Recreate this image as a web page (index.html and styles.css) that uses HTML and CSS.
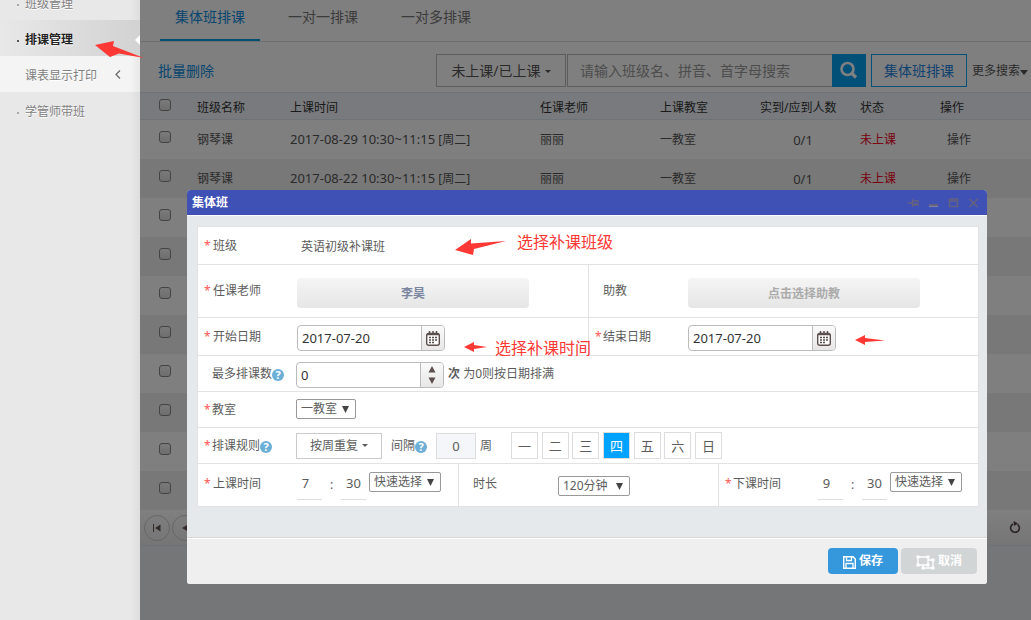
FILE: index.html
```html
<!DOCTYPE html>
<html lang="zh-CN">
<head>
<meta charset="utf-8">
<title>排课管理</title>
<link rel="stylesheet" href="styles.css">
</head>
<body>
<div class="app">
  <nav class="sidebar">
    <a class="nav-item dot" href="#">班级管理</a>
    <a class="nav-item dot active" href="#">排课管理</a>
    <a class="nav-item open" href="#">课表显示打印
      <svg class="chevron" width="6" height="9" viewBox="0 0 6 9"><path d="M5 .5 1 4.500 5 8.500" fill="none" stroke="#666" stroke-width="1.200"/></svg>
    </a>
    <a class="nav-item dot" href="#">学管师带班</a>
    <svg class="nav-arrow" width="50" height="20" viewBox="95 40 50 20"><path d="M95 45 114 41 113 46 144 58 119 53.500 110 57Z" fill="#fd3835"/></svg>
  </nav>
  <main class="main">
    <div class="tabs">
      <a class="tab current" href="#">集体班排课</a>
      <a class="tab" href="#">一对一排课</a>
      <a class="tab" href="#">一对多排课</a>
    </div>
    <div class="toolbar">
      <a class="batch" href="#">批量删除</a>
      <button class="filter" type="button">未上课/已上课<i class="caret"></i></button>
      <div class="search">
        <input class="search-text" type="text" aria-label="搜索" placeholder="请输入班级名、拼音、首字母搜索">
        <button class="search-go" type="button" aria-label="搜索"><svg width="19" height="19" viewBox="0 0 19 19"><circle cx="8.500" cy="8" r="6" fill="none" stroke="#fff" stroke-width="2.600"/><path d="m13 12.500 4 4" stroke="#fff" stroke-width="3.200"/></svg></button>
      </div>
      <button class="create" type="button">集体班排课</button>
      <a class="more" href="#">更多搜索<i class="caret big"></i></a>
    </div>
    <table class="grid">
      <colgroup><col class="c-check"><col class="c-name"><col class="c-time"><col class="c-teacher"><col class="c-room"><col class="c-count"><col class="c-state"><col></colgroup>
      <thead><tr><th><input type="checkbox" aria-label="全选"></th><th>班级名称</th><th>上课时间</th><th>任课老师</th><th>上课教室</th><th>实到/应到人数</th><th>状态</th><th>操作</th></tr></thead>
      <tbody>
        <tr><td><input type="checkbox" aria-label="选择"></td><td>钢琴课</td><td><span class="num">2017-08-29 10:30~11:15</span> [周二]</td><td>丽丽</td><td>一教室</td><td class="count">0/1</td><td class="late">未上课</td><td class="act">操作</td></tr>
        <tr><td><input type="checkbox" aria-label="选择"></td><td>钢琴课</td><td><span class="num">2017-08-22 10:30~11:15</span> [周二]</td><td>丽丽</td><td>一教室</td><td class="count">0/1</td><td class="late">未上课</td><td class="act">操作</td></tr>
        <tr><td><input type="checkbox" aria-label="选择"></td><td colspan="7"></td></tr>
        <tr><td><input type="checkbox" aria-label="选择"></td><td colspan="7"></td></tr>
        <tr><td><input type="checkbox" aria-label="选择"></td><td colspan="7"></td></tr>
        <tr><td><input type="checkbox" aria-label="选择"></td><td colspan="7"></td></tr>
        <tr><td><input type="checkbox" aria-label="选择"></td><td colspan="7"></td></tr>
        <tr><td><input type="checkbox" aria-label="选择"></td><td colspan="7"></td></tr>
        <tr><td><input type="checkbox" aria-label="选择"></td><td colspan="7"></td></tr>
        <tr><td><input type="checkbox" aria-label="选择"></td><td colspan="7"></td></tr>
      </tbody>
    </table>
    <div class="pager">
      <button class="page" type="button" aria-label="首页"><svg width="8" height="8" viewBox="0 0 8 8"><path d="M0 0h1v8H0zM7.500.500v7L2 4z" fill="#655"/></svg></button>
      <button class="page" type="button" aria-label="上一页"><svg width="8" height="8" viewBox="0 0 8 8"><path d="M7 .500v7L1 4z" fill="#655"/></svg></button>
      <button class="reload" type="button" aria-label="刷新"><svg width="12" height="13" viewBox="0 0 12 13"><path d="M8.500 3.300A4.400 4.400 0 1 1 4 3" fill="none" stroke="#544" stroke-width="1.600"/><path d="M4.500 0 9 2.500 5 5z" fill="#544"/></svg></button>
    </div>
    <div class="shade"></div>

    <section class="dialog" role="dialog" aria-label="集体班">
      <header class="dialog-head">
        <h2 class="dialog-title">集体班</h2>
        <button class="tool" type="button" aria-label="固定"><svg width="11" height="11" viewBox="0 0 11 11"><path d="M0 6h4M4.500 2v8M4.500 4H10v4H4.500M5 7h4" fill="none" stroke="#656281" stroke-width="1.300"/></svg></button>
        <button class="tool" type="button" aria-label="最小化"><svg width="11" height="11" viewBox="0 0 11 11"><rect x="1" y="7" width="9" height="2" fill="#656281"/><rect x="1" y="9" width="9" height="1" fill="#8583a5"/></svg></button>
        <button class="tool" type="button" aria-label="最大化"><svg width="11" height="11" viewBox="0 0 11 11"><path d="M1.500 2h8v7.500h-8zM1 4h9" fill="none" stroke="#656281" stroke-width="1.500"/></svg></button>
        <button class="tool" type="button" aria-label="关闭"><svg width="11" height="11" viewBox="0 0 11 11"><path d="m1.500 2 8 8M9.500 2l-8 8" stroke="#656281" stroke-width="1.600"/></svg></button>
      </header>
      <form class="dialog-body">
        <div class="sheet">
          <div class="row r-class">
            <div class="cell"><span class="label req">班级</span><span class="value">英语初级补课班</span></div>
          </div>
          <div class="row r-teacher two">
            <div class="cell"><span class="label req">任课老师</span><button class="pick chosen" type="button">李昊</button></div>
            <div class="cell"><span class="label">助教</span><button class="pick" type="button">点击选择助教</button></div>
          </div>
          <div class="row r-date two">
            <div class="cell"><label class="label req" for="start">开始日期</label><span class="combo"><input id="start" type="text" value="2017-07-20"><button type="button" aria-label="选择开始日期"><svg width="14" height="15" viewBox="0 0 14 15"><rect x=".700" y="2.500" width="12.600" height="11.800" rx="2" fill="#fff" stroke="#5a4f4c" stroke-width="1.400"/><path d="M1 3.500h12M3.500 0v4M7 0v4M10.500 0v4" stroke="#5a4f4c" stroke-width="1.500"/><path d="M3 6.500h2m1 0h2m1 0h2M3 9h2m1 0h2m1 0h2M3 11.500h2m1 0h2" stroke="#5a4f4c" stroke-width="1.700"/></svg></button></span></div>
            <div class="cell"><label class="label req" for="end">结束日期</label><span class="combo"><input id="end" type="text" value="2017-07-20"><button type="button" aria-label="选择结束日期"><svg width="14" height="15" viewBox="0 0 14 15"><rect x=".700" y="2.500" width="12.600" height="11.800" rx="2" fill="#fff" stroke="#5a4f4c" stroke-width="1.400"/><path d="M1 3.500h12M3.500 0v4M7 0v4M10.500 0v4" stroke="#5a4f4c" stroke-width="1.500"/><path d="M3 6.500h2m1 0h2m1 0h2M3 9h2m1 0h2m1 0h2M3 11.500h2m1 0h2" stroke="#5a4f4c" stroke-width="1.700"/></svg></button></span></div>
          </div>
          <div class="row narrow">
            <div class="cell"><label class="label" for="max">最多排课数<i class="help">?</i></label><span class="combo"><input id="max" type="text" value="0"><button type="button" aria-label="增减"><svg width="8" height="18" viewBox="0 0 8 18"><path d="M4 0 7.500 6.500h-7zM4 18 .500 11.500h7z" fill="#5a4f4c"/></svg></button></span><span class="hint"><b>次</b> 为0则按日期排满</span></div>
          </div>
          <div class="row narrow">
            <div class="cell"><label class="label req" for="room">教室</label><select id="room" class="select room"><option>一教室</option></select></div>
          </div>
          <div class="row narrow">
            <div class="cell rule"><span class="label req">排课规则<i class="help">?</i></span><button class="repeat" type="button">按周重复<i class="caret"></i></button><label class="gap-label" for="gap">间隔<i class="help">?</i></label><input id="gap" class="gap" type="text" value="0"><span class="week">周</span>
              <div class="days"><button type="button">一</button><button type="button">二</button><button type="button">三</button><button class="on" type="button">四</button><button type="button">五</button><button type="button">六</button><button type="button">日</button></div>
            </div>
          </div>
          <div class="row r-time three">
            <div class="cell"><span class="label req">上课时间</span><input class="clock" type="text" aria-label="上课时" value="7"><span class="colon">:</span><input class="clock" type="text" aria-label="上课分" value="30"><select class="select" aria-label="上课快速选择"><option>快速选择</option></select></div>
            <div class="cell"><label class="label" for="len">时长</label><select id="len" class="select"><option>120分钟</option></select></div>
            <div class="cell"><span class="label req">下课时间</span><input class="clock" type="text" aria-label="下课时" value="9"><span class="colon">:</span><input class="clock" type="text" aria-label="下课分" value="30"><select class="select" aria-label="下课快速选择"><option>快速选择</option></select></div>
          </div>
        </div>
      </form>
      <footer class="dialog-foot">
        <button class="btn save" type="button"><svg width="13" height="13" viewBox="0 0 13 13"><path d="M.700.700h9.300l2.300 2.300v9.300H.700z" fill="none" stroke="#fff" stroke-width="1.400"/><path d="M3.500 1v3.500h5V1M3 12V7.500h7V12" fill="none" stroke="#fff" stroke-width="1.300"/></svg>保存</button>
        <button class="btn cancel" type="button"><svg width="19" height="15" viewBox="0 0 19 15"><path d="M2 2h10v8H2zM12 5h5v8H7v-3" fill="none" stroke="#fff" stroke-width="1.300"/><path d="M.500.500h3v3h-3zM10.500.500h3v3h-3zM.500 8.500h3v3h-3zM10.500 8.500h3v3h-3zM15.500 3.500h3v3h-3zM15.500 11.500h3v3h-3zM5.500 11.500h3v3h-3z" fill="#fff"/></svg>取消</button>
      </footer>
      <svg class="marks" width="450" height="125" viewBox="450 235 450 125" fill="#fd3835"><path d="M455 250 471 239v4.500L506 241 474 249l-1 6z"/><path d="m464 347 10-5v3l13 2-13 2v3z"/><path d="m855 340 10-5v3l20 2.500-20 1.500v3z"/></svg>
      <span class="note note-class">选择补课班级</span>
      <span class="note note-time">选择补课时间</span>
    </section>
  </main>
</div>
</body>
</html>
```

FILE: styles.css
```css
* { box-sizing: border-box; }
body {
  margin: 0;
  font: 12px/18px "Noto Sans", "Noto Sans CJK SC", sans-serif;
  color: #555;
}
button, input, select { font: inherit; color: inherit; margin: 0; }
button { padding: 0; cursor: pointer; }
a { color: inherit; text-decoration: none; }
i { font-style: normal; }
svg { display: block; flex: none; }
.app { display: flex; min-height: 100vh; overflow: hidden; }

.sidebar {
  position: relative;
  z-index: 2;
  width: 140px;
  flex: none;
  margin-top: -16px;
  background: linear-gradient(90deg, #e9e8e8 130px, #dedede);
}
.nav-item {
  position: relative;
  display: flex;
  align-items: center;
  height: 36px;
  padding: 3px 0 0 25px;
  color: #808080;
  text-shadow: 0 1px 0 #fff;
}
.dot::before {
  content: "";
  position: absolute;
  left: 17px;
  top: 20px;
  width: 2px;
  height: 2px;
  background: #aaa;
}
.active {
  background: linear-gradient(90deg, #e9e8e8, #d2d2d2);
  color: #222;
  font-weight: bold;
}
.active::before { background: #555; }
.active::after {
  content: "";
  position: absolute;
  right: 0;
  top: 15px;
  border: 5px solid transparent;
  border-left: 0;
  border-right-color: #fff;
}
.open { background: linear-gradient(90deg, #f4f4f4 130px, #e8e8e8); }
.chevron { margin: 0 0 2px 18px; }
.nav-arrow { position: absolute; left: 95px; top: 56px; }

.main { position: relative; flex: 1; min-width: 0; background: #eaecf0; }
.tabs {
  display: flex;
  height: 42px;
  padding-left: 20px;
  gap: 13px;
  background: #fff;
  border-bottom: 1px solid #ddd;
  font-size: 14px;
}
.tab { width: 100px; height: 41px; line-height: 34px; text-align: center; color: #777; }
.current { color: #0a8ce0; border-bottom: 2px solid #00a0e9; }
.toolbar {
  display: flex;
  align-items: center;
  height: 50px;
  padding: 7px 3px 0 18px;
  background: #fff;
  font-size: 14px;
}
.batch { margin-right: auto; color: #0a8ce0; }
.filter { width: 130px; height: 33px; background: #fff; border: 1px solid #bbb; margin-right: 1px; }
.caret {
  display: inline-block;
  margin-left: 4px;
  border: 3px solid transparent;
  border-top-color: currentColor;
  border-bottom: 0;
  vertical-align: 3px;
}
.search { display: flex; width: 299px; margin-right: 5px; }
.search-text { flex: 1; min-width: 0; height: 33px; padding: 0 12px; background: #fff; border: 1px solid #bbb; border-right: 0; }
.search-text::placeholder { color: #999; opacity: 1; }
.search-go { display: grid; place-items: center; width: 34px; height: 33px; border: 0; background: #00a0f0; }
.create { width: 96px; height: 33px; margin-right: 5px; border: 1px solid #00a0f0; background: #fff; color: #1a82e0; }
.more { font-size: 12px; white-space: nowrap; }
.big { margin-left: 0; border-width: 5px 4px 0; vertical-align: 0; }

.grid { width: 100%; table-layout: fixed; border-collapse: collapse; background: #fff; }
.c-check { width: 50px; }
.c-name { width: 93px; }
.c-time { width: 250px; }
.c-teacher { width: 120px; }
.c-room, .c-count { width: 100px; }
.c-state { width: 80px; }
.grid th { height: 28px; padding: 3px 0 0 7px; text-align: left; font-weight: normal; color: #333; }
.grid thead tr { background: #f0f5fa; box-shadow: inset 0 1px #dde6ee, inset 0 -1px #dde6ee; }
.grid td { height: 39px; padding: 0 0 0 7px; }
.grid tbody tr:nth-child(even) { background: #f0f0f0; }
.grid th:first-child { padding: 0 0 2px 19px; }
.grid td:first-child { padding: 0 0 6px 19px; }
.grid input {
  display: block;
  width: 12px;
  height: 12px;
  appearance: none;
  border: 1px solid #888;
  border-radius: 3px;
  background: linear-gradient(#f4f4f4, #ddd);
}
.num { font-size: 13px; }
.grid .count { padding: 0; text-align: center; font-size: 13px; }
.grid .late { color: #f00020; }
.grid .act { padding-left: 14px; }
.pager {
  display: flex;
  align-items: center;
  gap: 2px;
  height: 36px;
  padding: 0 10px 0 4px;
  background: linear-gradient(#fff, #ebebeb);
  border-bottom: 1px solid #dde3ea;
}
.page { display: grid; place-items: center; width: 26px; height: 26px; border: 1px solid #ccc; border-radius: 50%; background: none; }
.reload { margin-left: auto; border: 0; background: none; }
.shade { position: absolute; inset: 0; background: rgba(0, 0, 0, .5); }

.dialog {
  position: absolute;
  left: 47px;
  right: 44px;
  top: 190px;
  border-radius: 4px 4px 3px 3px;
  background: #e5e9ec;
  overflow: hidden;
}
.dialog-head {
  display: flex;
  align-items: center;
  gap: 9px;
  height: 26px;
  padding: 0 8px 0 5px;
  background: #3f51b5;
  border-bottom: 1px solid #fff;
}
.dialog-title { margin: 0 auto 0 0; font-size: 12px; color: #fff; }
.tool { border: 0; background: none; }
.dialog-body { padding: 10px 8px 30px 10px; }
.sheet { background: #fff; border: 1px solid #e2e2e2; color: #5c5c5c; }
.row { display: grid; border-bottom: 1px solid #e2e2e2; }
.row:last-child { border-bottom: 0; }
.two { grid-template-columns: 1fr 1fr; }
.three { grid-template-columns: 1fr 1fr 1fr; }
.cell { display: flex; align-items: center; min-width: 0; }
.cell + .cell { border-left: 1px solid #e2e2e2; }
.cell + .cell .label { padding-left: 14px; }
.cell + .cell .req::before { left: 6px; }
.r-class { height: 38px; }
.r-teacher { height: 53px; }
.r-date { height: 38px; }
.narrow { height: 36px; }
.r-time { height: 42px; }
.label { position: relative; display: flex; align-items: center; flex: none; width: 99px; padding-left: 15px; }
.r-time .label { padding-bottom: 2px; }
.req::before { content: "*"; position: absolute; left: 6px; top: 0; color: #f55; }
.narrow .label { width: 98px; padding-left: 14px; }
.value { padding: 2px 0 0 4px; }
.pick {
  width: 232px;
  height: 30px;
  margin-top: 3px;
  padding-top: 2px;
  border: 0;
  border-radius: 4px;
  background: linear-gradient(#f5f5f5, #e6e6e6);
  color: #aaa;
  font-weight: bold;
}
.chosen { color: #7a86a0; }
.combo {
  display: flex;
  width: 148px;
  height: 26px;
  margin-top: 3px;
  border: 1px solid #bbb;
  border-radius: 4px;
  background: #fff;
  overflow: hidden;
  font-size: 13px;
  color: #333;
}
.narrow .combo { margin-top: 2px; }
.combo input { flex: 1; min-width: 0; border: 0; padding: 0 4px; background: none; }
.combo button { display: grid; place-items: center; width: 23px; border: 0; border-left: 1px solid #bbb; background: linear-gradient(#fafafa, #e8e6e6); }
.help {
  width: 12px;
  height: 12px;
  margin-top: 3px;
  border-radius: 50%;
  background: #6baed6;
  color: #fff;
  font-size: 11px;
  line-height: 12px;
  font-weight: bold;
  text-align: center;
}
.hint { padding-left: 4px; }
.select {
  appearance: none;
  width: 72px;
  height: 20px;
  padding: 0 0 0 4px;
  border: 1px solid #999;
  border-radius: 2px;
  line-height: 18px;
  background: #fff url("data:image/svg+xml,%3Csvg xmlns='http://www.w3.org/2000/svg' width='7' height='7'%3E%3Cpath d='M0 0h7L3.5 7z' fill='%23444'/%3E%3C/svg%3E") no-repeat right 6px top 6px;
}
.room { width: 60px; }
.narrow .room { margin-bottom: 1px; }
.repeat { width: 86px; height: 26px; border: 1px solid #ccc; background: #fff; }
.gap-label { display: flex; align-items: center; padding: 0 9px; }
.gap { width: 40px; height: 26px; border: 1px solid #ddd; background: #f4f6f9; text-align: center; font-size: 13px; }
.week { padding: 0 19px 0 4px; }
.days { display: flex; justify-content: space-between; width: 211px; }
.days button { width: 27px; height: 27px; border: 1px solid #ddd; background: #fff; font-size: 13px; }
.days .on { background: #00a2ff; color: #fff; }
.clock { width: 25px; height: 33px; margin-bottom: 4px; padding: 0 8px 0 0; border: 0; border-bottom: 1px solid #ddd; background: none; text-align: center; font-size: 13px; }
.clock ~ .clock { padding: 0; }
.colon { width: 19px; text-align: center; }
.r-time .select { margin-top: 1px; }
.r-time .clock + .select { margin: 0 0 6px 3px; }
.dialog-foot {
  display: flex;
  justify-content: flex-end;
  gap: 3px;
  height: 47px;
  padding: 10px 10px 0 0;
  background: #efefef;
  border-top: 1px solid #d8d8d8;
  box-shadow: inset 0 1px #fff;
}
.btn { display: flex; align-items: center; justify-content: center; gap: 3px; height: 26px; border: 0; border-radius: 4px; color: #fff; font-weight: bold; }
.btn svg { margin-top: 2px; }
.save { width: 70px; background: #3598dc; }
.cancel { width: 76px; background: #d1d5d6; }
.marks { position: absolute; left: 263px; top: 45px; pointer-events: none; }
.note { position: absolute; color: #fd3835; font-size: 16px; line-height: 20px; font-weight: 400; white-space: nowrap; }
.note-class { left: 330px; top: 42px; }
.note-time { left: 308px; top: 148px; }
```
